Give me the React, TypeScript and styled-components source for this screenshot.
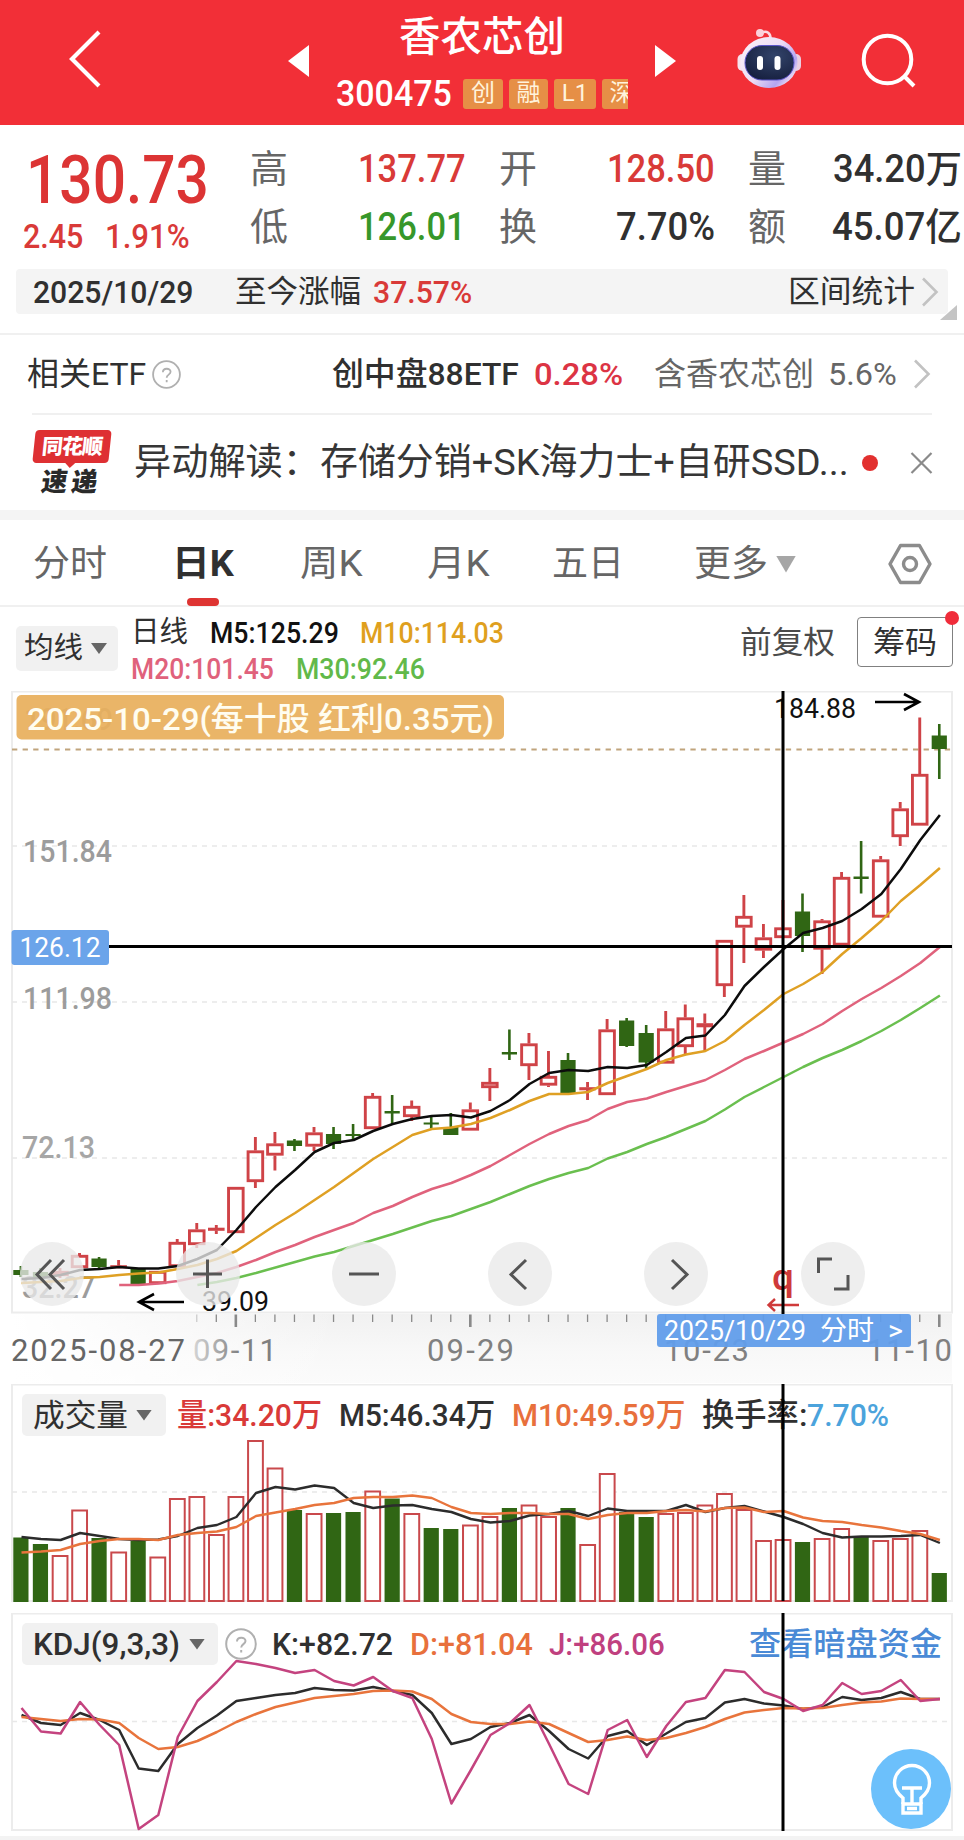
import React, { useLayoutEffect, useRef, useState } from 'react';
import styled, { createGlobalStyle } from 'styled-components';

const SANS = "Roboto, 'Noto Sans CJK SC', sans-serif";
const RED = '#d93a38';
const UP = '#cf4347';
const DOWN = '#306614';
const INK = '#303030';
const GREY = '#666666';

const GlobalStyle = createGlobalStyle`
  * { box-sizing: border-box; }
  html, body { margin: 0; padding: 0; background: #ffffff; }
  body { width: 964px; height: 1840px; overflow: hidden; font-family: ${SANS}; color: ${INK}; }
  svg { display: block; }
`;

/* ---------- text squeezed or stretched to a given width ---------- */

const FitBox = styled.span<{ $w: number; $ml?: number; $size: number; $color?: string; $weight?: number }>`
  display: block;
  flex: none;
  width: ${(p) => p.$w}px;
  margin-left: ${(p) => p.$ml ?? 0}px;
  height: ${(p) => Math.round(p.$size * 1.2)}px;
  line-height: ${(p) => Math.round(p.$size * 1.2)}px;
  font-size: ${(p) => p.$size}px;
  font-weight: ${(p) => p.$weight ?? 400};
  color: ${(p) => p.$color ?? INK};
  white-space: pre;
`;

const FitInner = styled.span`
  display: inline-block;
  transform-origin: 0 50%;
`;

interface FitProps {
  w: number;
  ml?: number;
  size: number;
  color?: string;
  weight?: number;
  children: React.ReactNode;
}

function Fit({ w, ml, size, color, weight, children }: FitProps) {
  const ref = useRef<HTMLSpanElement>(null);
  const [scale, setScale] = useState(1);
  useLayoutEffect(() => {
    if (ref.current && ref.current.offsetWidth) setScale(w / ref.current.offsetWidth);
  }, [w]);
  return (
    <FitBox $w={w} $ml={ml} $size={size} $color={color} $weight={weight}>
      <FitInner ref={ref} style={{ transform: `scaleX(${scale})` }}>{children}</FitInner>
    </FitBox>
  );
}

/* ---------- header ---------- */

const Header = styled.header`
  display: flex;
  align-items: flex-start;
  height: 125px;
  background: #f22f37;
`;
const HeaderIcon = styled.svg<{ $ml: number; $mt: number }>`
  flex: none;
  margin-left: ${(p) => p.$ml}px;
  margin-top: ${(p) => p.$mt}px;
`;
const TitleBlock = styled.div`
  display: flex;
  flex-direction: column;
  align-items: center;
  width: 292px;
  margin-left: 27px;
  padding-top: 13px;
`;
const CodeRow = styled.div`
  display: flex;
  align-items: center;
  width: 292px;
  height: 42px;
  margin-top: 11px;
  overflow: hidden;
`;
const Tag = styled.span<{ $w?: number; $ml?: number }>`
  flex: none;
  width: ${(p) => p.$w ?? 39}px;
  height: 30px;
  margin-left: ${(p) => p.$ml ?? 6}px;
  border-radius: 3px;
  background: #e68f46;
  color: #fff3dc;
  font-size: 24px;
  line-height: 29px;
  text-align: center;
`;

/* ---------- quote ---------- */

const Quote = styled.section`
  height: 210px;
  border-bottom: 2px solid #f0f0f0;
`;
const QuoteTop = styled.div`
  display: flex;
  height: 144px;
`;
const PriceCol = styled.div`
  width: 250px;
  padding: 16px 0 0 22px;
`;
const ChangeRow = styled.div`
  display: flex;
  margin-top: -3px;
`;
const Stats = styled.div`
  display: grid;
  grid-template-rows: 58px 58px;
  padding-top: 15px;
`;
const StatRow = styled.div`
  display: flex;
  align-items: center;
`;
const Strip = styled.div`
  display: flex;
  align-items: center;
  width: 932px;
  height: 45px;
  margin-left: 16px;
  padding-left: 16px;
  border-radius: 4px;
  background: #f4f4f4;
`;
const Chevron = styled.svg<{ $ml: number }>`
  flex: none;
  margin-left: ${(p) => p.$ml}px;
`;
const Corner = styled.div`
  width: 17px;
  height: 15px;
  margin: -9px 0 0 940px;
  position: relative;
  background: #c4c4c4;
  clip-path: polygon(100% 0, 100% 100%, 0 100%);
`;

/* ---------- related / news ---------- */

const EtfRow = styled.section`
  display: flex;
  align-items: center;
  width: 900px;
  height: 80px;
  margin-left: 32px;
  border-bottom: 2px solid #f0f0f0;
`;
const NewsRow = styled.section`
  display: flex;
  align-items: center;
  height: 95px;
`;
const NewsLogo = styled.div`
  flex: none;
  width: 80px;
  height: 66px;
  margin-left: 32px;
  text-align: center;
`;
const LogoTop = styled.div`
  position: relative;
  width: 76px;
  height: 33px;
  margin-left: 2px;
  border-radius: 4px;
  background: #de3033;
  transform: skewX(-6deg);
  color: #fff;
  font: 900 21px/31px 'Noto Sans CJK SC', sans-serif;
  letter-spacing: -1px;
  &::after {
    content: '';
    position: absolute;
    left: 32px;
    top: 32px;
    border: 6px solid transparent;
    border-top-color: #de3033;
  }
`;
const LogoBottom = styled.div`
  margin-top: 3px;
  transform: skewX(-8deg);
  color: #2a2a2a;
  font: 900 26px/27px 'Noto Sans CJK SC', sans-serif;
  letter-spacing: 4px;
`;
const RedDot = styled.span`
  width: 16px;
  height: 16px;
  margin-left: 13px;
  border-radius: 50%;
  background: #e2302f;
`;
const Band = styled.div`
  height: 10px;
  background: #f4f4f4;
`;

/* ---------- tabs ---------- */

const Tabs = styled.nav`
  display: flex;
  align-items: center;
  height: 87px;
  padding-top: 3px;
  border-bottom: 2px solid #f0f0f0;
`;
const ActiveTab = styled.div`
  display: flex;
  flex-direction: column;
  align-items: center;
  align-self: flex-end;
  margin: 0 0 -1px 65px;
`;
const TabMark = styled.div`
  width: 32px;
  height: 8px;
  margin-top: 12px;
  border-radius: 4px;
  background: #de3432;
`;
const Caret = styled.span<{ $w?: number; $h?: number; $color?: string; $ml?: number }>`
  flex: none;
  width: ${(p) => p.$w ?? 16}px;
  height: ${(p) => p.$h ?? 11}px;
  margin-left: ${(p) => p.$ml ?? 9}px;
  background: ${(p) => p.$color ?? '#666666'};
  clip-path: polygon(0 0, 100% 0, 50% 100%);
`;

/* ---------- moving averages bar ---------- */

const MaBar = styled.section`
  display: flex;
  height: 84px;
`;
const Picker = styled.button<{ $w: number; $h: number; $pl: number }>`
  display: flex;
  flex: none;
  align-items: center;
  width: ${(p) => p.$w}px;
  height: ${(p) => p.$h}px;
  padding: 0 0 0 ${(p) => p.$pl}px;
  border: 0;
  border-radius: 5px;
  background: #f1f1f1;
  font-family: ${SANS};
  text-align: left;
`;
const MaPicker = styled.div`
  margin: 19px 0 0 16px;
`;
const MaLines = styled.div`
  width: 608px;
  padding: 8px 0 0 13px;
`;
const MaLine = styled.div`
  display: flex;
  height: 36px;
`;
const Adjust = styled.div`
  padding-top: 17px;
`;
const ChipButton = styled.div`
  position: relative;
  display: flex;
  align-items: center;
  width: 96px;
  height: 50px;
  margin: 10px 0 0 22px;
  padding-left: 15px;
  border: 1.5px solid #808080;
  border-radius: 4px;
`;
const ChipDot = styled.span`
  position: absolute;
  right: -7px;
  top: -7px;
  width: 14px;
  height: 14px;
  border-radius: 50%;
  background: #f02c3a;
`;

/* ---------- charts ---------- */

const PricePanel = styled.section`
  height: 693px;
`;
const IndicatorPanel = styled.section<{ $h: number }>`
  position: relative;
  height: ${(p) => p.$h}px;
  padding-top: 10px;
`;
const IndicatorHead = styled.div`
  display: flex;
  align-items: center;
  height: 42px;
  padding-left: 22px;
`;
const Overlay = styled.svg`
  position: absolute;
  left: 0;
  top: 0;
  pointer-events: none;
`;
const BulbButton = styled.div`
  position: absolute;
  right: 13px;
  bottom: 7px;
  width: 80px;
  height: 80px;
  border-radius: 50%;
  background: #6cc0fb;
`;
const Footer = styled.div`
  height: 4px;
  background: #f3f3f3;
`;

const X0 = 20.9;
const STEP = 19.54;
const cx = (i: number) => X0 + STEP * i;
const path = (ys: number[], start = 0) =>
  ys.map((y, i) => `${(cx(i + start) + 0.6).toFixed(1)},${y}`).join(' ');

/* direction, high, body top, body bottom, low */
type Candle = ['u' | 'd', number, number, number, number];
const candles: Candle[] = [
  ['d', 1266, 1270, 1275, 1277], ['d', 1268, 1272, 1277, 1279], ['u', 1268, 1271, 1276, 1278], ['u', 1253, 1255, 1268, 1268],
  ['d', 1257, 1258.5, 1267, 1268], ['u', 1260, 1265.5, 1268, 1268], ['d', 1269, 1269, 1284, 1285.5], ['u', 1271, 1271, 1284, 1284],
  ['u', 1239, 1242, 1267, 1267], ['u', 1223, 1229.5, 1245, 1248], ['u', 1225, 1228, 1230.5, 1234], ['u', 1187, 1187, 1233, 1233],
  ['u', 1137, 1150.5, 1182, 1188], ['u', 1132, 1143.5, 1155.5, 1170.5], ['d', 1139, 1140.5, 1146, 1151], ['u', 1127, 1132.5, 1146.5, 1151],
  ['d', 1127, 1134, 1144, 1149], ['d', 1124, 1134, 1136, 1139], ['u', 1093, 1096, 1129, 1129], ['d', 1095, 1111, 1113.5, 1125],
  ['u', 1100.5, 1106, 1117, 1121], ['d', 1116, 1122.5, 1124.5, 1128], ['d', 1113, 1127, 1135, 1135], ['u', 1102.5, 1109.5, 1130.5, 1130.5],
  ['u', 1068, 1082, 1088, 1101], ['d', 1029.5, 1052, 1054.5, 1060], ['u', 1033, 1043.5, 1066, 1080], ['u', 1051, 1076, 1085.5, 1087],
  ['d', 1053, 1060, 1094, 1094], ['u', 1082, 1087.5, 1090, 1100], ['u', 1019, 1029.5, 1095, 1095], ['d', 1018, 1020.5, 1046, 1047],
  ['d', 1025, 1033, 1062.5, 1068.5], ['u', 1011, 1028.5, 1063.5, 1063.5], ['u', 1004.5, 1017.5, 1047, 1054.5], ['u', 1013.5, 1023.5, 1027, 1051],
  ['u', 940, 940, 986, 997], ['u', 895, 916, 927.5, 963], ['u', 924, 937.5, 950.5, 958], ['u', 900, 927.5, 938, 938],
  ['d', 893.5, 911.5, 936, 952], ['u', 919, 920.5, 949.5, 974], ['u', 872, 877, 945.5, 945.5], ['d', 841, 876.5, 879, 893.5],
  ['u', 856, 859.5, 917.5, 917.5], ['u', 802, 808.5, 837, 846], ['u', 717.5, 774, 825.5, 825.5], ['d', 724, 735.5, 749, 779],
];
const ma5 = [1279, 1278, 1275, 1270, 1269, 1267, 1268.5, 1268.5, 1266, 1259, 1250, 1230, 1207, 1187, 1170, 1152, 1143, 1140, 1131, 1124, 1119, 1116, 1115, 1117.5, 1111, 1100, 1084, 1073, 1070, 1071, 1067, 1068, 1065, 1052, 1038, 1035.5, 1015, 986, 967, 949, 933, 928, 921, 909, 894, 869, 840, 815];
const ma10 = [1283, 1282, 1281, 1278, 1277, 1275, 1273.5, 1272.5, 1269, 1265, 1259, 1251, 1238, 1225, 1213, 1200, 1187, 1173, 1159, 1147, 1135, 1129, 1127.5, 1124, 1118, 1110, 1101, 1094, 1094, 1092, 1083, 1076, 1069, 1060, 1054.5, 1051, 1041, 1025, 1010, 994, 984, 972, 954, 938, 921, 901, 885, 868];
const ma20 = [1285, 1285, 1283.5, 1281, 1277, 1273, 1267, 1260, 1252, 1245, 1237, 1230, 1223, 1213, 1206, 1197, 1189, 1183, 1175, 1166, 1155, 1144, 1134, 1126, 1120, 1109, 1102, 1098.5, 1092, 1086, 1080, 1070, 1059, 1051, 1042.5, 1034, 1024, 1011, 999, 988, 976, 963, 947];
const ma30 = [1285, 1282, 1278, 1273, 1267.5, 1262, 1256.5, 1252, 1246, 1240, 1234, 1227.5, 1221, 1216, 1209, 1202, 1194, 1186, 1179, 1173, 1168, 1158.5, 1152, 1144, 1137, 1129, 1121, 1109.5, 1097, 1087, 1077, 1067, 1058, 1050, 1041, 1031, 1020, 1008, 995.5];

const volDown = new Set([0, 1, 4, 6, 14, 16, 17, 19, 21, 22, 25, 28, 31, 32, 40, 43, 47]);
const volTop = [1537.5, 1544, 1555, 1509.5, 1538, 1551.5, 1541, 1556.5, 1498, 1496, 1534, 1496, 1440, 1467.5, 1510, 1513, 1513, 1512, 1490.5, 1498.5, 1513, 1528, 1529, 1524.5, 1516, 1508, 1504.5, 1516, 1508, 1544, 1473, 1512, 1517, 1513, 1512, 1504.5, 1493, 1509, 1540, 1539, 1542, 1538, 1528, 1536, 1540, 1538, 1530, 1573];
const vol5 = [1537, 1539, 1540, 1533, 1536, 1539, 1540, 1539.5, 1536, 1528, 1525, 1517, 1493, 1487, 1489.5, 1485.5, 1488, 1503, 1508, 1505.5, 1505, 1509, 1512, 1519, 1522.5, 1521, 1515.5, 1514, 1511, 1516, 1508.5, 1511, 1511, 1511, 1505, 1512, 1508, 1506, 1511.5, 1517, 1524, 1533, 1537.5, 1536.5, 1536.5, 1536, 1535, 1543];
const vol10 = [1552.5, 1551.5, 1550, 1544, 1541, 1539, 1539, 1540, 1535, 1533, 1531.5, 1527, 1516, 1512.5, 1509, 1505, 1503, 1498, 1497, 1497, 1495.5, 1498, 1507, 1513, 1514, 1513, 1513, 1514, 1514, 1519, 1515, 1513, 1513, 1511, 1510, 1511.5, 1508, 1507.5, 1512, 1511, 1517.5, 1521, 1522, 1525, 1527.5, 1531, 1534, 1540];

const kLine = [1715, 1723, 1725, 1713, 1720, 1730, 1768.5, 1771, 1744, 1728, 1715.5, 1701, 1698, 1695, 1693, 1688, 1690, 1690.5, 1687, 1691, 1695, 1713, 1744, 1739, 1727, 1723, 1715, 1731, 1749, 1758.5, 1736, 1731, 1745, 1733.5, 1722, 1718, 1702.5, 1699, 1703.5, 1705.5, 1709, 1707, 1697, 1700, 1698, 1692, 1699, 1699];
const dLine = [1717, 1719, 1721, 1719, 1719.5, 1723, 1738, 1749, 1747, 1741, 1732, 1722, 1714, 1707, 1702.5, 1698, 1696, 1694, 1691, 1690.5, 1691.5, 1699, 1714, 1722, 1724, 1724, 1721.5, 1724, 1733, 1742, 1740, 1736.5, 1740, 1738, 1733, 1727, 1719, 1712.5, 1710, 1708, 1708.5, 1708, 1705, 1702.5, 1701.5, 1698.5, 1699, 1699];
const jLine = [1708, 1731.5, 1733.5, 1702, 1725, 1745, 1829, 1815, 1737, 1701, 1682, 1661, 1664, 1668, 1673, 1670, 1681, 1685.5, 1677, 1691, 1698, 1739, 1803.5, 1770, 1735, 1723, 1705, 1744, 1784, 1794, 1730, 1720, 1757, 1726, 1702, 1698, 1670, 1672, 1692, 1699, 1711, 1705, 1683, 1694, 1691, 1680, 1701, 1699];

function CandleMark({ i, c }: { i: number; c: Candle }) {
  const [dir, high, top, bottom, low] = c;
  const x = cx(i);
  if (dir === 'd') {
    return (
      <g fill={DOWN}>
        <rect x={x - 1.3} y={high} width={2.6} height={low - high} />
        <rect x={x - 7.6} y={top} width={15.2} height={bottom - top} />
      </g>
    );
  }
  return (
    <g stroke={UP} strokeWidth={2.9} fill="none">
      {top > high && <line x1={x} x2={x} y1={high} y2={top} />}
      {low > bottom && <line x1={x} x2={x} y1={bottom} y2={low} />}
      {bottom - top < 5 ? (
        <line x1={x - 8.3} x2={x + 8.3} y1={(top + bottom) / 2} y2={(top + bottom) / 2} strokeWidth={bottom - top + 0.6} />
      ) : (
        <rect x={x - 7.3} y={top + 1.3} width={14.6} height={Math.max(1, bottom - top - 2.6)} />
      )}
    </g>
  );
}

interface LabelProps {
  x: number;
  y: number;
  w: number;
  size: number;
  fill: string;
  weight?: number;
  spread?: boolean;
  children: React.ReactNode;
}
function Label({ x, y, w, size, fill, weight, spread, children }: LabelProps) {
  return (
    <text x={x} y={y} fontSize={size} fill={fill} fontWeight={weight ?? 400} fontFamily={SANS}
      textLength={w} lengthAdjust={spread ? 'spacing' : 'spacingAndGlyphs'}>
      {children}
    </text>
  );
}

const CROSS_X = 783;

function PriceChart() {
  return (
    <svg width={964} height={693} viewBox="0 691 964 693">
      <defs>
        <linearGradient id="axisShade" x1="0" y1="0" x2="0" y2="1">
          <stop offset="0" stopColor="#f1f1f1" />
          <stop offset="0.55" stopColor="#f8f8f8" />
          <stop offset="1" stopColor="#fbfbfb" />
        </linearGradient>
        <linearGradient id="axisFade" x1="0" y1="0" x2="1" y2="0">
          <stop offset="0" stopColor="#ffffff" />
          <stop offset="0.35" stopColor="#ffffff" stopOpacity="0" />
        </linearGradient>
        <linearGradient id="dateFade" gradientUnits="userSpaceOnUse" x1="195" y1="0" x2="240" y2="0">
          <stop offset="0" stopColor="#d2d2d2" />
          <stop offset="1" stopColor="#808080" />
        </linearGradient>
      </defs>
      <rect x={12} y={1314} width={940} height={69} fill="url(#axisShade)" />
      <rect x={12} y={1314} width={940} height={69} fill="url(#axisFade)" />
      <rect x={12} y={691.5} width={940} height={621} fill="none" stroke="#ececec" strokeWidth={2} />
      <g stroke="#e8e8e8" strokeWidth={1.5} strokeDasharray="5 5">
        <line x1={12} x2={952} y1={846} y2={846} />
        <line x1={12} x2={952} y1={1002} y2={1002} />
        <line x1={12} x2={952} y1={1158} y2={1158} />
      </g>
      <line x1={12} x2={952} y1={749.5} y2={749.5} stroke="#c0a47c" strokeWidth={1.8} strokeDasharray="5.3 5.3" />

      <Label x={23} y={861.5} w={89} size={32} weight={500} fill="#9c9c9c">151.84</Label>
      <Label x={23} y={1009} w={89} size={32} weight={500} fill="#9c9c9c">111.98</Label>
      <Label x={22} y={1157.5} w={73} size={32} weight={500} fill="#a6a6a6">72.13</Label>
      <Label x={22} y={1298} w={73} size={32} weight={500} fill="#9c9c9c">32.27</Label>
      <Label x={24} y={730} w={89} size={32} weight={500} fill="#999999">191.69</Label>

      {candles.map((c, i) => <CandleMark key={i} i={i} c={c} />)}
      <g fill="none" strokeWidth={2.5} strokeLinejoin="round">
        <polyline points={path(ma30, 9)} stroke="#6abf4f" />
        <polyline points={path(ma20, 5)} stroke="#e0627c" />
        <polyline points={path(ma10)} stroke="#dfa024" />
        <polyline points={path(ma5)} stroke="#0c0c0c" />
      </g>

      <Label x={774} y={717.5} w={82} size={28} fill="#111111">184.88</Label>
      <path d="M875 702H918M904 694L919 702L904 710" fill="none" stroke="#000" strokeWidth={2.6} />
      <Label x={202} y={1310.500} w={67} size={28} fill="#111111">39.09</Label>
      <path d="M184 1302H140M154 1294L139 1302L154 1310" fill="none" stroke="#000" strokeWidth={2.6} />

      <rect x={16.5} y={695} width={487.5} height={44.5} rx={5} fill="#e8af5c" fillOpacity={0.93} />
      <Label x={27} y={730} w={467} size={32} weight={500} fill="#fffdf0">2025-10-29(每十股 红利0.35元)</Label>

      <g fill="#e9e9e9" fillOpacity={0.78}>
        {[52, 208, 364, 520, 676, 833].map((x) => <circle key={x} cx={x} cy={1274} r={32} />)}
      </g>
      <g fill="none" stroke="#555555" strokeWidth={3}>
        <path d="M51 1260L37 1274.500L51 1289M64 1260L50 1274.500L64 1289" />
        <path d="M193 1274H222M207.500 1259.500V1288" />
        <path d="M349 1274H379" />
        <path d="M526 1260L511 1274.500L526 1289" />
        <path d="M672 1260L687 1274.500L672 1289" />
        <path d="M832 1259H818.500V1273M834 1289H848V1275" />
      </g>

      <line x1={109} x2={952} y1={946.5} y2={946.5} stroke="#000" strokeWidth={3} />
      <rect x={11.500} y={930} width={97.5} height={35} rx={3} fill="#6ba4ea" />
      <Label x={19.5} y={957} w={81} size={28} fill="#ffffff">126.12</Label>

      <Label x={772} y={1290} w={22} size={37} weight={500} fill="#cf3a3a">q</Label>
      <path d="M799 1305H769M775 1299L768.500 1305L775 1311" fill="none" stroke="#cf3a3a" strokeWidth={2.4} />
      <line x1={CROSS_X} x2={CROSS_X} y1={690} y2={1314} stroke="#000" strokeWidth={3} />

      <g stroke="#8a8a8a" strokeWidth={1.3}>
        {Array.from({ length: 39 }, (_, k) => k + 9).map((i) => {
          const major = i === 11 || i === 23 || i === 35 || i === 47;
          return (
            <line key={i} x1={cx(i)} x2={cx(i)} y1={1314.5} y2={major ? 1327 : 1322}
              strokeWidth={major ? 2.6 : 1.3} strokeOpacity={i === 9 ? 0.4 : 1} />
          );
        })}
      </g>
      <Label x={11} y={1361} w={174} size={31} fill="#666666" spread>2025-08-27</Label>
      <Label x={193} y={1361} w={84} size={31} fill="url(#dateFade)" spread>09-11</Label>
      <Label x={427} y={1361} w={87} size={31} fill="#808080" spread>09-29</Label>
      <Label x={664} y={1361} w={85} size={31} fill="#808080" spread>10-23</Label>
      <Label x={867} y={1361} w={85} size={31} fill="#808080" spread>11-10</Label>
      <rect x={657} y={1314} width={254} height={33} rx={3} fill="#619dea" fillOpacity={0.95} />
      <Label x={664} y={1340} w={142} size={28} fill="#ffffff">2025/10/29</Label>
      <Label x={820} y={1340} w={54} size={27} fill="#ffffff">分时</Label>
      <Label x={888} y={1340} w={15} size={28} fill="#ffffff">&gt;</Label>
    </svg>
  );
}

function VolumeChart() {
  return (
    <Overlay width={964} height={229} viewBox="0 1384 964 229">
      <rect x={12} y={1384.5} width={940} height={216.5} fill="none" stroke="#ececec" strokeWidth={2} />
      <line x1={12} x2={952} y1={1492} y2={1492} stroke="#e8e8e8" strokeWidth={1.5} strokeDasharray="5 5" />
      {volTop.map((top, i) =>
        volDown.has(i) ? (
          <rect key={i} x={cx(i) - 7.6} y={top} width={15.2} height={1602 - top} fill={DOWN} />
        ) : (
          <rect key={i} x={cx(i) - 7.3} y={top + 1} width={14.8} height={1600 - top} fill="#fff" stroke="#c9494c" strokeWidth={2} />
        ),
      )}
      <g fill="none" strokeWidth={2.4} strokeLinejoin="round">
        <polyline points={path(vol5)} stroke="#2c2c2c" />
        <polyline points={path(vol10)} stroke="#e8743c" />
      </g>
      <line x1={CROSS_X} x2={CROSS_X} y1={1383} y2={1601} stroke="#000" strokeWidth={3} />
    </Overlay>
  );
}

function KdjChart() {
  return (
    <Overlay width={964} height={223} viewBox="0 1613 964 223">
      <rect x={12} y={1613.500} width={940} height={216.5} fill="none" stroke="#ececec" strokeWidth={2} />
      <line x1={12} x2={952} y1={1721.5} y2={1721.5} stroke="#e8e8e8" strokeWidth={1.5} strokeDasharray="5 5" />
      <g fill="none" strokeWidth={2.5} strokeLinejoin="round">
        <polyline points={path(kLine)} stroke="#2c2c2c" />
        <polyline points={path(dLine)} stroke="#e8743c" />
        <polyline points={path(jLine)} stroke="#c4437f" />
      </g>
      <line x1={CROSS_X} x2={CROSS_X} y1={1612} y2={1831} stroke="#000" strokeWidth={3} />
    </Overlay>
  );
}

function Help({ r, ml }: { r: number; ml: number }) {
  const s = r * 2 + 2;
  return (
    <Chevron $ml={ml} width={s} height={s} viewBox="0 0 32 32" fill="none" stroke="#b0b0b0" strokeWidth={2}>
      <circle cx={16} cy={16} r={14.8} />
      <path d="M12 13.500C12 8.500 20.500 8.500 20.500 13C20.500 16 16.200 16.300 16.200 19.500M16.200 22V24.500" />
    </Chevron>
  );
}

function RightArrow({ ml }: { ml: number }) {
  return (
    <Chevron $ml={ml} width={18} height={30} viewBox="0 0 18 30" fill="none" stroke="#c2c2c2" strokeWidth={2.6}>
      <path d="M2 1.500L15.500 15L2 28.500" />
    </Chevron>
  );
}

function Robot() {
  return (
    <HeaderIcon $ml={61} $mt={28} width={66} height={62} viewBox="0 0 66 62">
      <defs>
        <linearGradient id="shell" x1="0" y1="0" x2="1" y2="0.7">
          <stop offset="0" stopColor="#fdf3f8" />
          <stop offset="0.55" stopColor="#ecdcf4" />
          <stop offset="0.85" stopColor="#b3a5f2" />
          <stop offset="1" stopColor="#f0dff2" />
        </linearGradient>
        <radialGradient id="visor" cx="0.6" cy="0.3" r="0.8">
          <stop offset="0" stopColor="#33446a" />
          <stop offset="1" stopColor="#141d3c" />
        </radialGradient>
      </defs>
      <path d="M24 5C30 2 34 5 33.500 12" fill="none" stroke="#fbd9e2" strokeWidth={2.6} />
      <circle cx={23} cy={5} r={4} fill="#fbd0da" />
      <rect x={0.5} y={26} width={10} height={17} rx={5} fill="#f6e3ee" />
      <rect x={54} y={26} width={10} height={17} rx={5} fill="#eacfe2" />
      <ellipse cx={32} cy={34.500} rx={28.5} ry={25.5} fill="url(#shell)" />
      <rect x={8} y={17.500} width={49} height={34.5} rx={17} fill="url(#visor)" stroke="#5b55c8" strokeWidth={1} />
      <rect x={20} y={28} width={6} height={14} rx={3} fill="#fff" />
      <rect x={37.500} y={28} width={6} height={14} rx={3} fill="#fff" />
    </HeaderIcon>
  );
}

export default function App() {
  return (
    <>
      <GlobalStyle />
      <Header>
        <HeaderIcon $ml={68} $mt={29} width={34} height={60} fill="none" stroke="#fff" strokeWidth={4.2}>
          <path d="M31 3L4 30L31 57" />
        </HeaderIcon>
        <HeaderIcon $ml={186} $mt={45} width={21} height={32} fill="#fff">
          <path d="M21 0V32L0 16Z" />
        </HeaderIcon>
        <TitleBlock>
          <Fit w={166} size={41} color="#fff" weight={500}>香农芯创</Fit>
          <CodeRow>
            <Fit w={116} size={36} color="#fff" weight={500}>300475</Fit>
            <Tag $w={40} $ml={11}>创</Tag>
            <Tag>融</Tag>
            <Tag $w={42}>L1</Tag>
            <Tag>深</Tag>
          </CodeRow>
        </TitleBlock>
        <HeaderIcon $ml={27} $mt={45} width={21} height={32} fill="#fff">
          <path d="M0 0V32L21 16Z" />
        </HeaderIcon>
        <Robot />
        <HeaderIcon $ml={58} $mt={32} width={56} height={56} fill="none" stroke="#fff" strokeWidth={4}>
          <circle cx={26.5} cy={27.500} r={23.8} />
          <path d="M43 44L53 54" />
        </HeaderIcon>
      </Header>

      <Quote>
        <QuoteTop>
          <PriceCol>
            <Fit w={183} ml={4} size={66} color="#dc3434" weight={500}>130.73</Fit>
            <ChangeRow>
              <Fit w={60} ml={1} size={33} color={RED} weight={500}>2.45</Fit>
              <Fit w={85} ml={22} size={33} color={RED} weight={500}>1.91%</Fit>
            </ChangeRow>
          </PriceCol>
          <Stats>
            <StatRow>
              <Fit w={38} size={38} color={GREY}>高</Fit>
              <Fit w={108} ml={70} size={39} color={RED} weight={500}>137.77</Fit>
              <Fit w={38} ml={33} size={38} color={GREY}>开</Fit>
              <Fit w={108} ml={70} size={39} color={RED} weight={500}>128.50</Fit>
              <Fit w={38} ml={33} size={38} color={GREY}>量</Fit>
              <Fit w={129} ml={47} size={38} weight={500}>34.20万</Fit>
            </StatRow>
            <StatRow>
              <Fit w={38} size={38} color={GREY}>低</Fit>
              <Fit w={108} ml={70} size={39} color="#36972a" weight={500}>126.01</Fit>
              <Fit w={38} ml={33} size={38} color={GREY}>换</Fit>
              <Fit w={99} ml={79} size={39} weight={500}>7.70%</Fit>
              <Fit w={38} ml={33} size={38} color={GREY}>额</Fit>
              <Fit w={130} ml={46} size={38} weight={500}>45.07亿</Fit>
            </StatRow>
          </Stats>
        </QuoteTop>
        <Strip>
          <Fit w={160} ml={1} size={32} weight={500}>2025/10/29</Fit>
          <Fit w={126} ml={42} size={31}>至今涨幅</Fit>
          <Fit w={99} ml={12} size={32} weight={500} color={RED}>37.57%</Fit>
          <Fit w={127} ml={316} size={31}>区间统计</Fit>
          <RightArrow ml={6} />
        </Strip>
        <Corner />
      </Quote>

      <EtfRow>
        <Fit w={119} ml={-5} size={32}>相关ETF</Fit>
        <Help r={13.5} ml={6} />
        <Fit w={187} ml={151} size={32} weight={500}>创中盘88ETF</Fit>
        <Fit w={89} ml={15} size={32} weight={500} color="#dc3444">0.28%</Fit>
        <Fit w={160} ml={31} size={32} color={GREY}>含香农芯创</Fit>
        <Fit w={69} ml={14} size={32} color={GREY}>5.6%</Fit>
        <RightArrow ml={16} />
      </EtfRow>
      <NewsRow>
        <NewsLogo>
          <LogoTop>同花顺</LogoTop>
          <LogoBottom>速递</LogoBottom>
        </NewsLogo>
        <Fit w={186} ml={22} size={37} color="#363636">异动解读：</Fit>
        <Fit w={529} ml={0} size={37} color="#363636">存储分销+SK海力士+自研SSD...</Fit>
        <RedDot />
        <Chevron $ml={32} width={23} height={22} fill="none" stroke="#8a8a8a" strokeWidth={2.2}>
          <path d="M1.500 1L21.500 21M21.500 1L1.500 21" />
        </Chevron>
      </NewsRow>
      <Band />

      <Tabs>
        <Fit w={74} ml={33} size={36} color={GREY}>分时</Fit>
        <ActiveTab>
          <Fit w={62} size={36} weight={700}>日K</Fit>
          <TabMark />
        </ActiveTab>
        <Fit w={63} ml={66} size={36} color={GREY}>周K</Fit>
        <Fit w={63} ml={64} size={36} color={GREY}>月K</Fit>
        <Fit w={72} ml={62} size={36} color={GREY}>五日</Fit>
        <Fit w={74} ml={70} size={36} color={GREY}>更多</Fit>
        <Caret $w={20} $h={17} $color="#a6a6a6" $ml={8} />
        <Chevron $ml={91} width={46} height={44} viewBox="0 0 46 44" fill="none" stroke="#8c8c8c" strokeWidth={3.4} strokeLinejoin="round">
          <path d="M13.500 3.500H32.500L43 22L32.500 40.500H13.500L3 22Z" />
          <circle cx={23} cy={22} r={6.5} />
        </Chevron>
      </Tabs>

      <MaBar>
        <MaPicker>
          <Picker $w={102} $h={45} $pl={8}>
            <Fit w={59} size={29}>均线</Fit>
            <Caret $ml={8} />
          </Picker>
        </MaPicker>
        <MaLines>
          <MaLine>
            <Fit w={57} size={29}>日线</Fit>
            <Fit w={129} ml={22} size={30} weight={500} color="#111">M5:125.29</Fit>
            <Fit w={144} ml={21} size={30} weight={500} color="#dfa01e">M10:114.03</Fit>
          </MaLine>
          <MaLine>
            <Fit w={143} size={30} weight={500} color="#e0627c">M20:101.45</Fit>
            <Fit w={129} ml={22} size={30} weight={500} color="#62b94a">M30:92.46</Fit>
          </MaLine>
        </MaLines>
        <Adjust>
          <Fit w={95} ml={14} size={31} color="#4a4a4a">前复权</Fit>
        </Adjust>
        <ChipButton>
          <Fit w={64} size={31}>筹码</Fit>
          <ChipDot />
        </ChipButton>
      </MaBar>

      <PricePanel>
        <PriceChart />
      </PricePanel>

      <IndicatorPanel $h={229}>
        <IndicatorHead>
          <Picker $w={144} $h={42} $pl={11}>
            <Fit w={95} size={31}>成交量</Fit>
            <Caret $ml={8} />
          </Picker>
          <Fit w={145} ml={11} size={32} weight={500} color={RED}>量:34.20万</Fit>
          <Fit w={156} ml={17} size={32} weight={500}>M5:46.34万</Fit>
          <Fit w={173} ml={17} size={32} weight={500} color="#e8703c">M10:49.59万</Fit>
          <Fit w={105} ml={17} size={32} weight={500}>换手率:</Fit>
          <Fit w={82} ml={0} size={32} weight={500} color="#4ba3dc">7.70%</Fit>
        </IndicatorHead>
        <VolumeChart />
      </IndicatorPanel>

      <IndicatorPanel $h={223}>
        <IndicatorHead>
          <Picker $w={196} $h={42} $pl={10}>
            <Fit w={147} ml={1} size={32} weight={500}>KDJ(9,3,3)</Fit>
            <Caret $ml={9} />
          </Picker>
          <Help r={15} ml={7} />
          <Fit w={121} ml={15} size={32} weight={500}>K:+82.72</Fit>
          <Fit w={123} ml={17} size={32} weight={500} color="#e8703c">D:+81.04</Fit>
          <Fit w={116} ml={16} size={32} weight={500} color="#c0407f">J:+86.06</Fit>
          <Fit w={193} ml={84} size={32} weight={500} color="#4a8ad6">查看暗盘资金</Fit>
        </IndicatorHead>
        <KdjChart />
        <BulbButton>
          <svg width={80} height={80} fill="none" stroke="#fff" strokeWidth={3.4}>
            <path d="M32 55V49C27 45 23.500 41 23.500 34A17.500 17.500 0 0 1 58.500 34C58.500 41 55 45 50 49V55" />
            <path d="M31 39H51M41 39V54M32 55H50V64H32ZM36 59.500H46" />
          </svg>
        </BulbButton>
      </IndicatorPanel>
      <Footer />
    </>
  );
}
